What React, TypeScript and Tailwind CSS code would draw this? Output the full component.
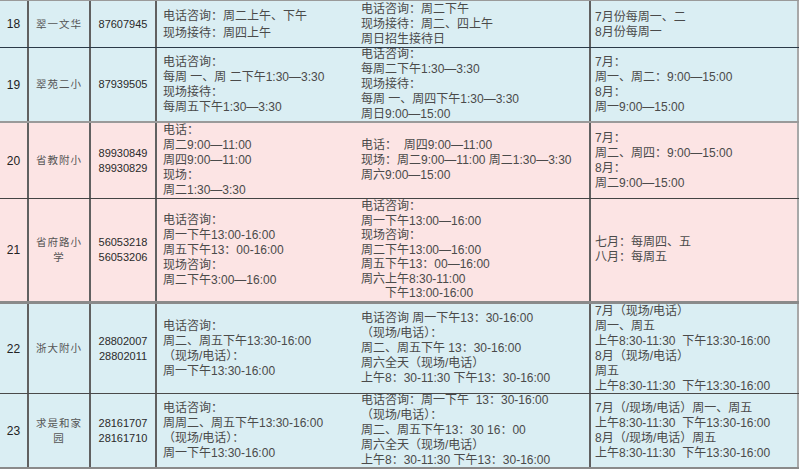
type Row = {
  no: string;
  name: string;
  phones: string[];
  phone: string[];
  onsite: string[];
  summer: string[];
  rowCls: string;
  phoneCls?: string;
  onsiteCls?: string;
  summerCls?: string;
};

const rows: Row[] = [
  {
    no: "18",
    name: "翠一文华",
    phones: ["87607945"],
    phone: ["电话咨询：周二上午、下午", "现场接待：周四上午"],
    onsite: ["电话咨询：周二下午", "现场接待：周二、四上午", "周日招生接待日"],
    summer: ["7月份每周一、二", "8月份每周一"],
    rowCls: "h-[47px] bg-[#daeef3] border-b border-[#2b3a48]",
    phoneCls: "leading-[17px] pt-[2px]",
    summerCls: "leading-[13px] pt-[2px]",
  },
  {
    no: "19",
    name: "翠苑二小",
    phones: ["87939505"],
    phone: ["电话咨询：", "每周 一、周 二下午1:30—3:30", "现场接待：", "每周五下午1:30—3:30"],
    onsite: ["电话咨询：", "每周二下午1:30—3:30", "现场接待：", "每周 一、周四下午1:30—3:30", "周日9:00—15:00"],
    summer: ["7月：", "周一、周二：9:00—15:00", "8月：", "周一9:00—15:00"],
    rowCls: "h-[75px] bg-[#daeef3] border-b-2 border-[#9a9a9a]",
  },
  {
    no: "20",
    name: "省教附小",
    phones: ["89930849", "89930829"],
    phone: ["电话：", "周二9:00—11:00", "周四9:00—11:00", "现场：", "周二1:30—3:30"],
    onsite: ["电话：  周四9:00—11:00", "现场：周二9:00—11:00 周二1:30—3:30", "周六9:00—15:00"],
    summer: ["7月：", "周二、周四：9:00—15:00", "8月：", "周二9:00—15:00"],
    rowCls: "h-[76px] bg-[#fce4e4] border-b border-[#444]",
  },
  {
    no: "21",
    name: "省府路小学",
    phones: ["56053218", "56053206"],
    phone: ["电话咨询：", "周一下午13:00-16:00", "周五下午13：00-16:00", "现场咨询：", "周二下午3:00—16:00"],
    onsite: [
      "电话咨询：",
      "周一下午13:00—16:00",
      "现场咨询：",
      "周二下午13:00—16:00",
      "周五下午13：00—16:00",
      "周六上午8:30-11:00",
      "　　下午13:00-16:00",
    ],
    summer: ["七月：每周四、五", "八月：每周五"],
    rowCls: "h-[105px] bg-[#fce4e4] border-b-[3px] border-[#8a8a8a]",
    onsiteCls: "leading-[14.5px]",
  },
  {
    no: "22",
    name: "浙大附小",
    phones: ["28802007", "28802011"],
    phone: ["电话咨询：", "周二、周五下午13:30-16:00", "（现场/电话）：", "周一下午13:30-16:00"],
    onsite: [
      "电话咨询 周一下午13：30-16:00",
      "（现场/电话）：",
      "周二、周五下午 13：30-16:00",
      "周六全天（现场/电话）",
      "上午8：30-11:30 下午13：30-16:00",
    ],
    summer: [
      "7月（现场/电话）",
      "周一、周五",
      "上午8:30-11:30  下午13:30-16:00",
      "8月（现场/电话）",
      "周五",
      "上午8:30-11:30  下午13:30-16:00",
    ],
    rowCls: "h-[90px] bg-[#daeef3] border-b border-[#4a4a4a]",
  },
  {
    no: "23",
    name: "求是和家园",
    phones: ["28161707", "28161710"],
    phone: ["电话咨询：", "周周二、周五下午13:30-16:00", "（现场/电话）：", "周一下午13:30-16:00"],
    onsite: [
      "电话咨询：周一下午  13：30-16:00",
      "（现场/电话）：",
      "周二、周五下午13：30 16：00",
      "周六全天（现场/电话）",
      "上午8：30-11:30 下午13：30-16:00",
    ],
    summer: [
      "7月（/现场/电话）周一、周五",
      "上午8:30-11:30  下午13:30-16:00",
      "8月（/现场/电话）周五",
      "上午8:30-11:30  下午13:30-16:00",
    ],
    rowCls: "h-[75px] bg-[#daeef3] border-b-2 border-[#8a8a8a]",
  },
];

function Lines({ lines }: { lines: string[] }) {
  return (
    <>
      {lines.map((l, i) => (
        <div key={i} className="whitespace-pre">
          {l}
        </div>
      ))}
    </>
  );
}

export default function App() {
  return (
    <div className="min-h-[471px] w-[800px] bg-white font-['Liberation_Sans','Noto_Sans_CJK_SC',sans-serif] text-[#4a4a4a]">
      <div className="w-[799px] border-t border-[#9a9a9a]">
        {rows.map((r) => (
          <div key={r.no} className={`flex ${r.rowCls}`}>
            <div className="flex w-[29px] shrink-0 items-center justify-center border-r-2 border-[#606060] text-[12px] text-[#222]">
              {r.no}
            </div>
            <div className="flex w-[62px] shrink-0 items-center justify-center border-r-2 border-[#606060] px-[4px] text-center text-[10.5px] leading-[15px] tracking-[1px] text-[#555]">
              {r.name}
            </div>
            <div className="flex w-[66px] shrink-0 flex-col items-center justify-center border-r-2 border-[#606060] text-[11px] leading-[15px] text-[#2a2a2a]">
              <Lines lines={r.phones} />
            </div>
            <div className="flex w-[434px] shrink-0 border-r-2 border-[#606060] text-[12px] leading-[15px]">
              <div className={`flex w-[204px] shrink-0 flex-col justify-center pl-[6px] ${r.phoneCls ?? ""}`}>
                <Lines lines={r.phone} />
              </div>
              <div className={`flex flex-1 flex-col justify-center ${r.onsiteCls ?? ""}`}>
                <Lines lines={r.onsite} />
              </div>
            </div>
            <div
              className={`flex w-[208px] shrink-0 flex-col justify-center border-r-2 border-[#a8a8a8] pl-[4px] text-[12px] leading-[15px] ${r.summerCls ?? ""}`}
            >
              <Lines lines={r.summer} />
            </div>
          </div>
        ))}
      </div>
    </div>
  );
}
